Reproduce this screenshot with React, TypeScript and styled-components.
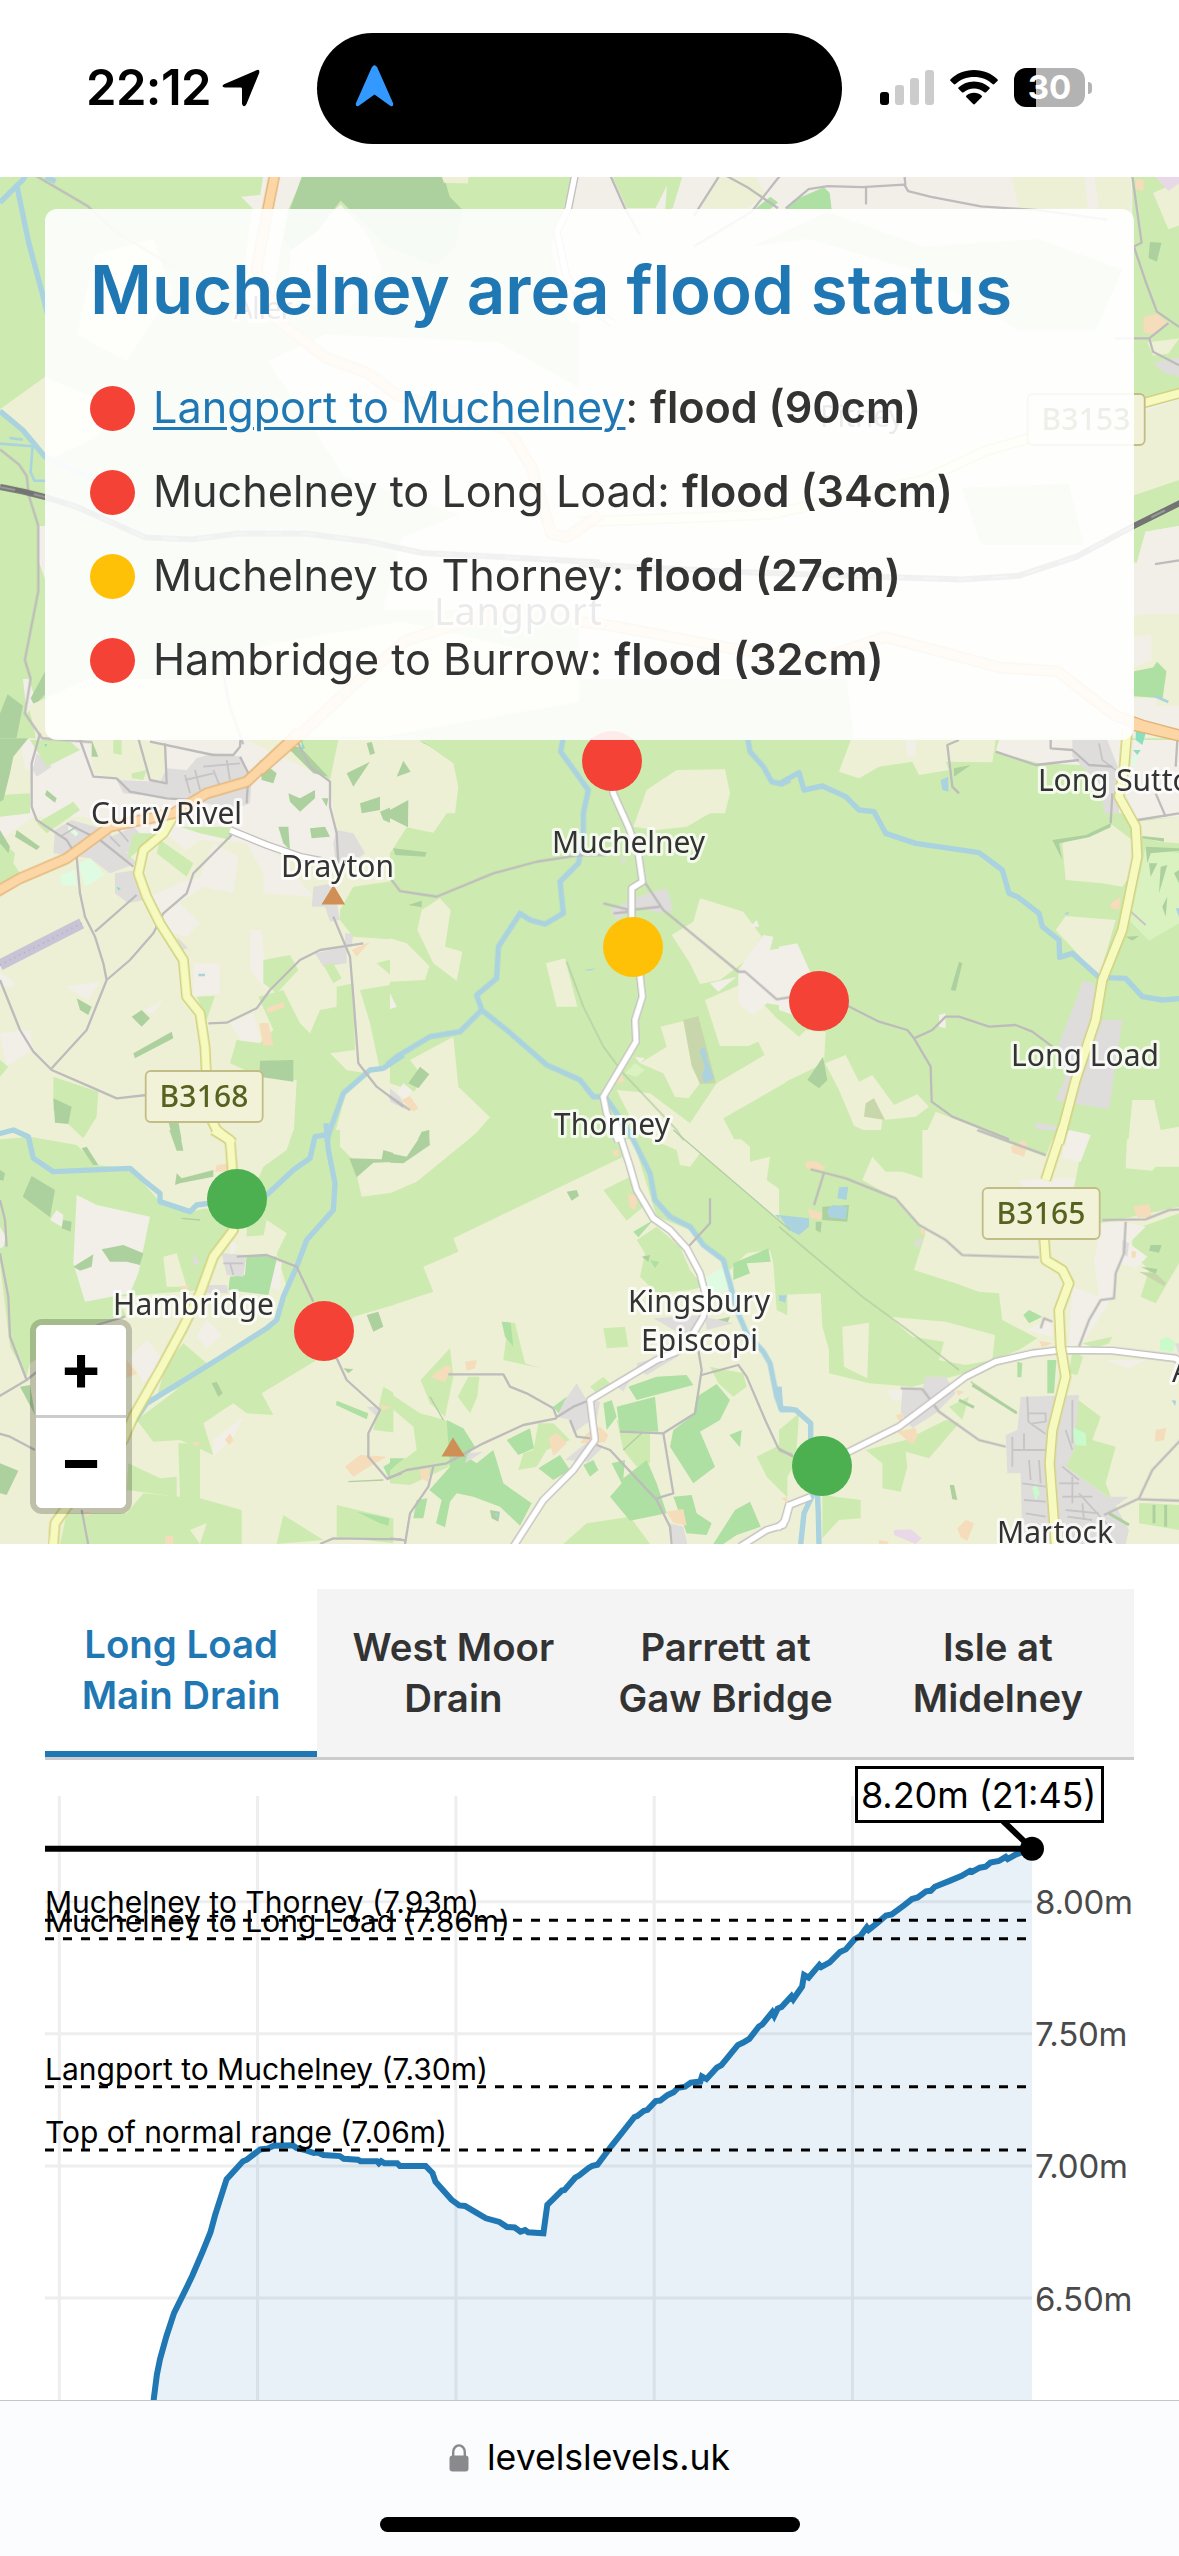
import React from 'react';
import styled, { createGlobalStyle } from 'styled-components';

const Global = createGlobalStyle`
  * { box-sizing: border-box; }
  body { margin: 0; background: #fff; font-family: Inter, "Liberation Sans", sans-serif; }
`;

const BLUE = '#1f77b4';
const RED = '#f44336';
const AMBER = '#ffc107';
const GREEN = '#4caf50';

/* ---------- page frame ---------- */

const Screen = styled.div`
  width: 1179px;
  height: 2556px;
  display: flex;
  flex-direction: column;
  overflow: hidden;
  background: #fff;
`;

const StatusBar = styled.header`
  height: 177px;
  flex: none;
  display: flex;
  align-items: flex-start;
  padding-top: 33px;
`;

const StatusLeft = styled.div`
  width: 317px;
  height: 111px;
  padding: 0 0 2px 86px;
  display: flex;
  align-items: center;
  gap: 14px;
`;

const Clock = styled.span`
  width: 122px;
  font-size: 49px;
  font-weight: 600;
  line-height: 60px;
  letter-spacing: -0.6px;
  color: #000;
`;

const Island = styled.div`
  width: 525px;
  height: 111px;
  border-radius: 56px;
  background: #000;
  display: flex;
  align-items: center;
  padding: 0 0 5px 38px;
`;

const StatusRight = styled.div`
  height: 111px;
  padding: 0 0 2px 38px;
  display: flex;
  align-items: center;
  gap: 16px;
`;

const Signal = styled.div`
  width: 54px;
  height: 35px;
  display: flex;
  align-items: flex-end;
  gap: 6px;
`;

const SignalBar = styled.i<{ $h: number; $on?: boolean }>`
  width: 9px;
  height: ${(p) => p.$h}px;
  border-radius: 3px;
  background: ${(p) => (p.$on ? '#000' : '#ccc')};
`;

const Battery = styled.div`
  display: flex;
  align-items: center;
  gap: 3px;
`;

const BatteryBody = styled.div`
  width: 71px;
  height: 39px;
  border-radius: 12px;
  background: linear-gradient(to right, #000 22px, #b3b3b3 22px);
  color: #fff;
  font-size: 33px;
  font-weight: 700;
  line-height: 39px;
  text-align: center;
`;

const BatteryTip = styled.i`
  width: 4px;
  height: 12px;
  border-radius: 0 4px 4px 0;
  background: #b3b3b3;
`;

/* ---------- map ---------- */

const MapSection = styled.section`
  position: relative;
  height: 1367px;
  flex: none;
  overflow: hidden;
`;

const MapSvg = styled.svg`
  display: block;
  width: 1179px;
  height: 1367px;
`;

const TileLayer = styled.g`
  filter: blur(0.7px);
`;

const MapLabel = styled.text`
  font-family: "Noto Sans", sans-serif;
  font-size: 30px;
  fill: #333;
  stroke: rgba(255, 255, 255, 0.75);
  stroke-width: 6px;
  stroke-linejoin: round;
  paint-order: stroke;
`;

const ShieldLabel = styled.text`
  font-family: "Noto Sans", sans-serif;
  font-size: 30px;
  font-weight: 500;
  fill: #57621f;
`;

const StatusPanel = styled.div`
  position: absolute;
  left: 45px;
  top: 32px;
  width: 1089px;
  height: 531px;
  padding: 42px 45px;
  border-radius: 12px;
  background: rgba(255, 255, 255, 0.9);
`;

const PanelTitle = styled.h1`
  margin: 0 0 50.5px;
  color: ${BLUE};
  font-size: 67.2px;
  font-weight: 600;
  line-height: 77px;
  white-space: nowrap;
`;

const RouteList = styled.ul`
  list-style: none;
  margin: 0;
  padding: 0;
  display: flex;
  flex-direction: column;
  gap: 24px;
`;

const RouteRow = styled.li`
  display: flex;
  align-items: center;
  gap: 18px;
  height: 60px;
  color: #333;
  font-size: 43.2px;
  line-height: 60px;
  white-space: nowrap;

  b { font-weight: 600; }
`;

const RouteText = styled.span`
  padding-bottom: 3px;
`;

const Dot = styled.i<{ $color: string }>`
  width: 45px;
  height: 45px;
  border-radius: 50%;
  background: ${(p) => p.$color};
`;

const RouteLink = styled.a`
  color: ${BLUE};
  text-decoration: underline;
  text-decoration-thickness: 3px;
  text-underline-offset: 4px;
`;

const ZoomControl = styled.div`
  position: absolute;
  left: 30px;
  top: 1142px;
  width: 102px;
  border: 6px solid rgba(0, 0, 0, 0.2);
  border-radius: 12px;
  background-clip: padding-box;
`;

const ZoomButton = styled.button<{ $first?: boolean }>`
  display: block;
  width: 90px;
  height: ${(p) => (p.$first ? 93 : 90)}px;
  padding: 0 0 6px;
  border: 0;
  border-bottom: ${(p) => (p.$first ? '3px solid #ccc' : '0')};
  border-radius: ${(p) => (p.$first ? '6px 6px 0 0' : '0 0 6px 6px')};
  background: #fff;
  color: #000;
  font: 700 65px/84px Inter, sans-serif;
`;

/* ---------- tabs and chart ---------- */

const TabBar = styled.nav`
  flex: none;
  margin: 45px 45px 0;
  display: grid;
  grid-template-columns: repeat(4, 1fr);
  height: 171px;
  border-bottom: 3px solid #ccc;
`;

const Tab = styled.button<{ $active?: boolean }>`
  display: flex;
  align-items: center;
  justify-content: center;
  border: 0;
  border-bottom: ${(p) => (p.$active ? `6px solid ${BLUE}` : '0')};
  padding: 0 10px;
  background: ${(p) => (p.$active ? '#fff' : '#f4f4f4')};
  color: ${(p) => (p.$active ? BLUE : '#333')};
  font: 600 38.4px/51px Inter, sans-serif;
  white-space: pre;
`;

const ChartSvg = styled.svg`
  display: block;
  flex: none;
  width: 1179px;
  height: 640px;
`;

const ThresholdText = styled.text`
  font-size: 30px;
  fill: #000;
`;

const AxisText = styled.text`
  font-size: 33px;
  fill: #4a4a4a;
`;

const CalloutText = styled.text`
  font-size: 36px;
  fill: #000;
`;

/* ---------- browser bar ---------- */

const BrowserBar = styled.footer`
  flex: none;
  height: 156px;
  border-top: 1px solid #c3c6c8;
  background: #fbfcfd;
  display: flex;
  flex-direction: column;
  align-items: center;
  justify-content: space-between;
  padding: 35px 0 24px;
`;

const Address = styled.div`
  display: flex;
  align-items: center;
  gap: 18px;
  font-size: 35.6px;
  line-height: 44px;
  color: #000;
`;

const HomeIndicator = styled.i`
  width: 420px;
  height: 15px;
  border-radius: 8px;
  background: #000;
`;

/* ---------- map data ---------- */

type Shape = [kind: string, ...points: string[]];
type Tile = {
  x: number;
  y: number;
  k: number;
  areas: Shape[];
  lines: Shape[];
};

const FILL: Record<string, string> = {
  farm: '#eef0d5',
  grass: '#cdebb0',
  bare: '#f2efe9',
  town: '#dfdddc',
  wood: '#add19e',
  orchard: '#aedfa3',
  yard: '#f5dcba',
  park: '#dffce2',
  pitch: '#c8facc',
  scrub: '#daf2c0',
  olive: '#c8d7ab',
  water: '#aad3df',
  lilac: '#e8d8e8',
  teal: '#88e0be',
};

const tiles: Tile[] = [
  {
    x: 0, y: 170, k: 2.613,
    areas: [
      ['grass', '0,0 1568,0 1568,1500 0,1500'],
      ['bare',
        '690,0 800,0 750,110 700,400 650,400 640,240 660,100 630,70 680,65',
        '1505,0 1568,0 1568,400 1490,400 1440,200',
        '760,210 890,90 960,170 1000,260 900,380 750,330',
        '700,500 850,430 1300,450 1568,600 1568,1150 1000,1150 1050,960 1200,900 900,800',
        '100,930 118,930 118,1070 100,1020', '60,1330 75,1330 95,1390 70,1420'],
      ['wood',
        '795,0 1155,0 1175,70 1210,105 1190,200 1140,250 1010,200 890,80 830,160 760,210 740,180 755,110',
        '0,1420 20,1370 60,1400 40,1500 0,1568', '80,1380 118,1310 118,1370 90,1400'],
      ['farm',
        '1155,18 1225,18 1222,35 1160,33',
        '0,625 118,540 300,620 250,700 130,755',
        '250,220 400,180 450,320 330,500 200,430',
        '75,1400 230,1330 500,1330 700,1240 1050,1180 1568,1300 1568,1380 1000,1480 95,1490'],
    ],
    lines: [
      ['river',
        '0,85 60,25 75,0', '120,18 145,30', '45,45 75,190 110,320 125,380',
        '0,630 60,680 118,750 250,810'],
      ['stream', '0,715 85,722 80,790 90,812 130,812', '25,700 60,705'],
      ['minor',
        '85,10 230,95 300,160 450,250',
        '0,730 50,770 70,800 75,850 100,930 100,1100 65,1280 80,1330 65,1420 110,1485 240,1495',
        '580,1300 600,1400 635,1500'],
      ['rail', '0,828 60,840 120,855 200,880 380,960 500,965 620,950 800,950 960,970 1100,1000 1568,1025'],
      ['tertiary', '1505,0 1485,100 1455,160 1480,280 1530,350 1600,400'],
      ['aroad',
        '720,0 690,150 670,260 720,390 800,450 850,490 960,530 1040,590 1150,620 1330,680 1390,780 1440,950 1480,960 1568,900',
        '680,1568 780,1480 930,1340 1060,1230 1150,1200 1370,1140'],
    ],
  },
  {
    x: 579, y: 170, k: 2.613,
    areas: [
      ['bare', '0,0 1568,0 1568,1480 0,1480'],
      ['grass',
        '80,0 275,0 245,100 225,105 230,40 200,100 125,100',
        '1445,0 1568,0 1568,590 1450,620',
        '450,200 650,110 900,200 1200,180 1420,260 1350,420 1150,420 900,270 600,180',
        '0,1330 700,1330 720,1500 0,1500', '1000,830 1280,820 1320,980 1050,980'],
      ['farm',
        '370,0 450,0 490,65 440,100 320,100', '1125,0 1320,0 1330,100 1150,102', '1345,0 1445,0 1440,110 1360,110',
        '1500,60 1568,30 1568,145 1540,155', '1450,640 1568,600 1568,810 1450,850',
        '1450,1160 1568,1160 1568,1400 1450,1400', '1485,450 1568,440 1540,480 1500,485'],
      ['orchard', '560,80 640,45 655,60 660,102 540,102', '460,102 500,70 520,85 500,102'],
      ['lilac', '1490,0 1568,0 1568,35 1540,55'],
      ['wood', '1492,188 1522,190 1510,240 1488,230'],
      ['yard', '1475,385 1510,375 1540,400 1500,430 1475,425', '1455,25 1475,25 1475,55 1455,50'],
      ['town', '1500,505 1568,490 1568,540 1530,530'],
      ['grass', '1450,850 1568,810 1568,930 1480,945 1475,1030 1450,1025'],
      ['bare', '1480,945 1568,930 1568,1150 1450,1165 1455,1035', '1450,1220 1495,1215 1495,1280 1450,1300', '1450,1380 1510,1380 1500,1430 1450,1420'],
      ['orchard', '1450,1310 1500,1300 1510,1285 1535,1310 1525,1380 1450,1375'],
    ],
    lines: [
      ['minor',
        '80,10 120,100 160,170', '365,18 300,120', '375,10 440,45 520,100', '525,15 450,110 300,200',
        '540,100 600,50 650,42 740,45 850,38 860,55 920,70 1050,95 1200,105 1380,130',
        '750,45 750,90', '850,10 853,40',
        '1445,10 1470,190 1450,200 1480,290 1510,370 1568,410', '1400,440 1490,440 1540,400',
        '1490,440 1500,475 1568,510', '1505,1030 1568,1020'],
      ['stream', '1505,1375 1540,1390'],
      ['rail', '0,1030 400,1050 700,1060 1000,1070 1150,1060 1300,1010 1450,930 1580,865'],
      ['broad', '1600,575 1470,610', '1180,700 1060,735 900,810 500,900 0,920'],
      ['aroad', '0,1180 80,1190 400,1250 620,1280 800,1220 1100,1300 1250,1310 1400,1425 1470,1450 1600,1485'],
    ],
  },
  {
    x: 0, y: 730, k: 3,
    areas: [
      ['farm', '0,25 1200,25 1200,1235 0,1235'],
      ['bare',
        '60,30 740,30 990,150 1010,330 1000,400 830,370 940,500 790,490 790,430 740,340 600,330 560,360 480,300 420,350 320,280 250,260 100,260 0,330 0,260 90,200',
        '470,560 540,520 600,580 560,620 480,600', '610,470 700,490 715,380 640,340 600,440 540,460 450,500 470,560',
        '580,700 660,700 660,790 580,800', '750,600 785,600 800,780 750,720', '690,880 760,850 780,930 740,960',
        '0,910 90,900 95,960 20,1010', '0,725 45,760 40,770 0,770', '195,770 300,755 265,810', '425,845 490,810 460,850'],
      ['farm', '270,30 420,30 450,150 350,150 280,130', '420,30 500,40 490,160 450,150', '10,160 100,110 90,190 10,190'],
      ['town',
        '350,150 480,155 500,115 560,120 590,85 640,70 725,80 755,150 750,220 700,240 580,210 480,200 370,190',
        '165,300 215,270 320,300 410,400 330,430 270,385 160,370', '310,330 400,290 420,310 390,370',
        '345,430 410,420 430,510 385,520 345,490', '1010,300 1060,310 1095,370 1010,430 1000,340',
        '940,470 1000,460 1020,570 990,575 975,530 935,530', '945,670 1040,650 1040,700 970,710',
        '1035,610 1060,610 1055,650 1035,650', '110,70 155,110 110,140 98,120', '530,620 565,655 540,660'],
      ['grass',
        '90,30 205,30 240,60 140,110', '0,195 90,190 90,250 0,260', '110,280 220,215 240,240 140,310',
        '0,330 45,370 40,400 60,430 0,460', '400,310 460,310 430,350 380,390', '480,330 580,400 560,440 470,370',
        '540,290 700,290 690,330 600,310', '900,30 1015,30 990,150 930,120', '395,130 440,120 430,150 395,145',
        '1020,540 1060,470 1200,450 1200,630 1060,620 1020,570', '790,690 870,675 895,720 830,790 790,760',
        '775,800 850,780 900,880 930,910 960,840 1010,830 1010,770 1060,760 1065,960 990,970 1040,1020 1100,1030 1040,1080 1000,1230 880,1230 890,1050 780,1040 690,1000 710,930 780,940 820,900',
        '1080,780 1200,760 1200,960 1140,1020 1110,880', '160,1040 295,1085 290,1160 250,1225 160,1140',
        '590,800 645,797 620,870', '0,990 25,1010 0,1040', '970,705 1000,700 1025,745 1000,760', '340,30 365,30 365,75 340,70', '1130,700 1200,680 1200,760'],
      ['wood',
        '0,25 85,25 40,80 30,130 10,210 0,215', '140,180 170,205 165,218 135,195', '50,300 120,350 110,360 45,320', '0,300 30,350 25,370 0,340',
        '230,805 275,830 265,855 240,840', '395,860 425,840 450,865 425,890', '400,970 515,905 520,925 405,985',
        '780,992 880,990 880,1055 778,1040', '160,1105 215,1130 205,1182 165,1178', '865,190 900,205 945,180 945,205 900,245 870,215',
        '835,290 865,290 870,360 850,340', '930,295 975,290 990,320 935,325', '1040,130 1110,95 1060,170', '1080,220 1140,200 1140,240 1085,250',
        '1140,245 1200,220 1200,290 1150,270', '1100,40 1115,35 1125,70 1110,75', '780,90 830,130 820,160 785,150',
        '860,50 900,50 985,140 940,130', '275,30 295,80 275,80', '965,205 985,205 980,230', '505,1175 535,1175 545,1230 520,1230'],
      ['yard', '1055,660 1110,635 1070,680', '800,835 850,815 855,830 805,850', '778,880 805,878 820,945 790,948'],
      ['park', '235,400 270,385 315,435 255,470', '180,435 225,420 230,468 185,465', '205,285 235,310 228,320 205,300'],
      ['teal', '905,30 915,55 905,60', '350,470 362,475 355,482', '132,42 142,42 138,52'],
    ],
    lines: [
      ['minor',
        '120,10 95,100 95,230 110,270 200,330 230,380 240,490 255,560 285,620 310,700 320,750',
        '240,30 280,140 350,145 390,185 500,205 580,210', '415,25 450,150 500,160 495,40', '450,35 640,75 700,75 720,50 722,20',
        '720,80 745,130 740,220', '200,280 300,330 400,410', '285,605 410,495',
        '695,315 580,430 560,490 490,550 460,610 390,690 320,750 260,900 155,1015',
        '0,750 60,900 100,965 155,1020 270,1070 350,1105 440,1095',
        '625,880 680,878 770,835 810,780 900,690 960,660 1090,640',
        '895,40 930,110 990,155 990,230 1010,310 1015,400', '1000,560 1050,680 1060,800 1075,1000 1130,1070 1210,1130'],
      ['street', '555,135 570,190', '585,120 600,180', '555,150 640,130', '610,110 720,100', '330,320 360,350', '355,300 385,335', '180,320 230,290', '640,120 660,170', '680,90 690,150'],
      ['river', '1210,975 1150,1015 1110,1020 1030,1090 990,1200 980,1235'],
      ['stream', '595,735 615,735'],
      ['runway', '0,705 245,580'],
      ['tertiary', '690,300 800,345 900,380 1000,400'],
      ['broad', '525,250 490,310 430,360 415,430 440,500 480,580 550,690 560,800 600,850 615,950 620,1050', '630,1160 650,1200 700,1240'],
      ['aroad', '-10,485 60,445 200,385 330,290 520,250 620,190 740,155 900,5'],
    ],
  },
  {
    x: 390, y: 730, k: 3,
    areas: [
      ['grass', '0,25 1200,25 1200,1235 0,1235'],
      ['farm',
        '0,30 90,30 190,100 205,170 195,250 170,250 130,308 50,292 0,370',
        '730,290 770,180 860,120 1005,118 1020,190 1005,250 960,250 890,290 800,300',
        '82,600 95,540 150,505 182,540 165,650 217,665 200,752 130,700', '0,625 50,640 118,708 105,750 0,755',
        '60,990 190,920 205,1070 300,1162 230,1242 0,1242 0,1060 150,1110 130,1170 60,1140 90,1030',
        '468,700 525,685 562,830 500,830', '845,615 910,575 930,505 1060,545 1115,620 1070,690 990,750 930,762 900,700',
        '945,810 1060,760 1200,905 1200,930 1135,1000 1105,935 1075,948 990,948',
        '812,890 880,873 905,1010 930,1060 895,1105 855,1100 820,1030 750,1000 830,950',
        '680,1080 780,1090 900,1180 980,1060 1200,930 1200,1050 1000,1165 1040,1242 760,1242'],
      ['bare', '1045,720 1120,615 1150,620 1140,660 1200,650 1200,830 1130,820 1090,855 1045,820', '960,760 1040,740 985,785', '1080,590 1100,570 1108,590', '0,790 20,830 0,838', '735,980 765,985 750,1000', '20,1090 40,1060 65,1080 50,1110'],
      ['town', '660,540 760,495 830,475 850,540 810,550 740,530 680,570', '0,1075 30,1100 50,1140 0,1115', '690,375 710,390 700,405'],
      ['wood', '20,140 40,92 62,125', '0,240 55,210 54,292 0,265', '10,355 110,367 105,380 15,375', '55,525 95,512 95,532', '55,1060 90,1010 118,1033 85,1075', '80,1235 95,1205 118,1200 118,1235', '85,30 125,50 100,40'],
      ['olive', '880,870 925,858 978,1060 930,1062 905,1005'],
      ['water', '928,960 945,952 952,990 972,1045 945,1060 935,1040 945,1010', '580,720 620,715 600,722'],
      ['scrub', '705,1030 735,1000 765,1020 740,1040'],
      ['yard', '35,1110 60,1098 85,1135 70,1145', '675,1060 695,1035 705,1055'],
    ],
    lines: [
      ['minor',
        '5,450 30,483 140,500 310,430 440,395 570,375 650,375', '760,450 820,540 1045,725 1065,725 1160,808 1210,800',
        '640,520 720,540 810,530', '670,550 720,545', '0,1100 60,1140'],
      ['path', '530,695 580,830 640,950 700,1030 860,1200 880,1230'],
      ['river',
        '520,20 512,65 595,180 580,250 580,330 565,400 510,455 520,550 465,582 420,570 390,550 325,650 320,745 260,795 275,840 210,905 120,920 20,980 -10,1005',
        '275,840 350,900 470,1005 570,1050 610,1100 645,1100 680,1150 720,1215',
        '1072,20 1080,65 1120,110 1145,155 1175,162 1200,150'],
      ['tertiary', '665,150 670,190 715,290 745,370 757,455 725,475 725,580', '748,720 757,800 735,870 738,935 640,1100 650,1150 685,1235'],
    ],
  },
  {
    x: 779, y: 730, k: 3,
    areas: [
      ['grass', '20,25 1200,25 1200,1235 20,1235'],
      ['farm',
        '215,30 650,30 640,97 500,95 510,120 420,135 400,95 300,110 240,145 180,125',
        '850,340 1000,285 1060,330 1080,400 1030,470 970,460 860,450', '860,558 1010,570 990,640 960,740 830,600',
        '1070,275 1200,260 1200,340 1140,335 1080,320'],
      ['bare', '380,30 410,30 410,80 385,78', '660,30 1200,30 1200,260 1080,270 1000,240 910,105 780,100 650,65', '0,650 55,640 95,730 60,860 0,840', '480,855 500,850 500,895 480,890', '870,1200 940,1215 930,1242 860,1242'],
      ['town', '880,30 985,30 1020,120 1020,250 975,250 970,200 990,190 920,120 880,80', '910,752 945,760 960,870 1030,870 990,1137 910,1125 830,1110 860,1040 840,940 895,800', '770,1175 840,1190 830,1215 770,1195'],
      ['scrub', '1100,350 1200,370 1200,580 1110,632 1050,570'],
      ['farm', '0,870 60,920 80,900 140,905 135,1000 0,1065',
        '138,1000 200,975 240,1055 280,1035 345,1125 415,1093 450,1130 410,1160 310,1170 305,1207 265,1205 225,1187 180,1080',
        '470,1145 700,1235 430,1235', '1060,1110 1125,1110 1145,1200 1200,1190 1200,1235 1048,1235'],
      ['wood', '820,330 920,315 995,280 995,292 930,322 840,340 850,390', '525,115 575,105 525,140', '540,695 550,700 530,783 515,780', '132,980 145,1050 120,1075 85,1050',
        '1090,318 1155,325 1155,335 1090,325', '1110,400 1135,400 1115,440', '1145,410 1165,405 1140,490', '1185,430 1200,420 1200,460', '1150,530 1165,500 1160,560', '1100,350 1200,355 1200,362 1115,370 1105,400', '1040,620 1080,618 1060,632'],
      ['water', '485,150 508,140 508,185 490,180', '855,550 872,545 865,555', '1190,535 1200,535 1200,560'],
      ['olive', '285,1105 318,1170 255,1160 260,1120'],
      ['yard', '995,520 1025,500 1020,540 995,535'],
      ['teal', '1070,0 1100,10 1090,45 1070,30', '1062,60 1085,60 1075,75'],
      ['park', '1060,80 1075,80 1065,110 1055,105'],
    ],
    lines: [
      ['minor',
        '540,30 505,45 520,170 540,190', '650,65 770,105 900,90', '815,30 815,55 880,60 930,105 1000,110', '1130,190 1160,260', '1075,270 1200,250',
        '195,822 300,875 385,900 405,925 455,1010 458,1115 520,1160 690,1228', '405,925 460,900 500,860 540,860 630,890 710,885 760,905 820,950', '1000,190 995,280', '1195,30 1190,110'],
      ['street', '960,40 970,90 1010,120', '1050,540 1100,585'],
      ['river', '0,162 20,150 60,128 75,180 130,168 200,200 240,240 285,245 320,310 410,340 600,368 670,420 690,490 715,500 780,550 790,590 840,630 842,682 880,670 960,742 1040,745 1090,800 1150,810 1210,805'],
      ['broad', '1045,0 1035,120 1020,200 1070,290 1075,380 1030,600 970,750 950,870 890,1050 840,1240'],
      ['aroad', '1060,-15 1210,20'],
    ],
  },
  {
    x: 0, y: 1130, k: 3,
    areas: [
      ['farm', '0,28 1200,28 1200,1242 0,1242'],
      ['grass',
        '0,28 90,20 230,45 290,105 390,115 480,215 570,245 620,235 700,300 640,380 600,480 350,500 380,560 300,580 90,700 80,740 30,650 0,400',
        '880,0 1020,0 1020,50 1060,90 1085,200 1200,185 1200,520 1060,560 1000,660 785,790 820,855 740,850 700,820 610,880 640,975 540,930 460,935 410,870 650,690 830,570 860,470 830,370 860,310 800,270 740,230 790,110 860,60',
        '535,940 600,940 600,1105 725,1140 725,1242 180,1242 200,1150 380,1150 430,1090 540,1100', '385,1000 480,1045 530,1040 530,1100 380,1080',
        '830,1242 850,1155 970,1230', '1010,1125 1200,1170 1200,1242 1010,1220', '1150,770 1200,800 1200,910 1120,900', '550,640 620,700 580,760 470,800 500,700', '740,230 800,270 790,320 740,320'],
      ['farm', '740,320 855,310 830,370 740,370', '490,380 530,370 560,470 500,470', '570,1200 620,1180 600,1242'],
      ['bare', '230,195 290,225 450,260 415,430 390,490 255,515 220,400', '0,290 18,320 10,350 0,355', '150,270 170,240 190,255 185,290', '390,680 440,630 490,690 430,760', '590,620 620,570 665,615 620,655', '640,930 730,860 700,920 640,980', '820,400 845,395 838,480 812,470', '690,330 715,350 690,380'],
      ['wood', '95,138 165,180 150,262 68,200', '220,410 280,373 275,410 240,422', '305,358 370,345 430,370 420,405 380,395 330,395', '508,0 538,0 550,62 530,62',
        '525,165 530,130 545,145 640,120 640,140 540,160', '1048,85 1145,88 1150,60 1200,75 1200,95 1120,98 1070,142', '1100,555 1135,545 1150,590 1120,605', '635,760 650,755 668,790 655,800',
        '0,1000 55,1022 20,1095 0,1090', '245,55 260,50 295,105 280,105', '60,770 90,765 105,855', '190,270 215,275 212,305 185,295', '0,120 15,130 10,152 0,150', '1030,715 1060,718 1045,730'],
      ['orchard', '740,375 832,380 805,495 685,480 690,440 735,435', '1010,812 1105,850 1100,868 1008,825', '1070,1145 1168,1165 1165,1187 1140,1180', '1150,1010 1200,980 1200,1025 1165,1040'],
      ['town', '665,370 740,375 730,440 680,435', '1100,830 1140,830 1130,860', '625,465 680,465 685,490 620,490', '580,370 600,400 580,405'],
      ['yard', '650,105 690,100 680,125 645,125', '380,690 412,732 380,742', '535,470 572,465 560,480', '1035,1010 1080,975 1160,980 1100,1015 1060,1040', '675,930 690,910 700,930 688,945', '1140,825 1175,830 1150,842', '575,940 600,935 590,950', '495,1220 520,1218 520,1242 495,1242', '255,1145 280,1150 260,1160'],
    ],
    lines: [
      ['minor',
        '0,210 15,270 20,350', '0,370 25,500 30,620 80,750', '-5,800 80,750 130,710', '290,585 375,560', '710,380 800,375 890,410 940,515',
        '1010,685 1040,750 1140,840 1105,910 1105,980 1160,1045 1205,1030', '-5,910 30,920 105,960', '245,1140 265,1245', '960,1242 1000,1225 1205,1228'],
      ['street', '670,400 730,400', '690,400 700,435'],
      ['path', '545,265 600,270', '1045,1055 1150,1050'],
      ['river',
        '-5,12 40,0 85,20 100,85 160,125 390,115 430,150 480,190 480,215 570,245 590,225 700,210 800,195 880,120 930,85 945,20 975,15',
        '978,-20 985,60 1005,160 1000,240 920,330 890,410 850,500 830,570 800,595 650,690 440,820 380,910'],
      ['broad', '640,0 690,30 697,120 700,300 640,380 600,490 545,600 480,720 400,860 370,930 250,1080 200,1130 165,1180 160,1245'],
    ],
  },
  {
    x: 390, y: 1130, k: 3,
    areas: [
      ['farm', '10,28 1200,28 1200,1242 10,1242'],
      ['grass',
        '270,0 680,0 700,80 190,325 205,365 100,410 130,485 0,528 0,190 80,155',
        '720,0 860,60 870,105 900,110 930,70 1200,300 1200,560 1160,540 1150,400 1140,360 1070,370 1020,420 980,370 900,300 800,260',
        '640,180 720,140 760,230 710,272', '740,330 800,290 870,350 900,420 940,470 900,480 800,490 750,440 765,370',
        '1020,0 1200,0 1200,200 1130,150 1140,80 1080,95 1080,50', '0,790 90,850 165,870 255,950 200,1000 60,1065 0,1060 0,1020 80,960 70,890 0,830',
        '92,750 180,655 190,740 165,860 120,820', '203,800 235,740 268,740 262,800 240,850', '640,595 705,590 715,650 650,655', '355,575 375,580 405,700 450,715 340,690',
        '680,870 780,900 780,1000 740,1010 700,960', '400,970 430,960 445,880 490,880 540,930 470,960 440,1010 385,1020', '520,1242 590,1180 720,1160 780,1242', '1100,980 1200,930 1200,1110 1130,1040',
        '600,770 640,740 660,760 620,790', '960,710 1060,730 1070,770 1030,800 985,760'],
      ['park', '950,440 1000,412 1015,480 985,490 950,480'],
      ['orchard',
        '170,870 220,895 255,950 230,980 260,1000 310,960 340,1060 425,1120 390,1187 330,1130 250,1100 200,1090 180,1115 165,1192 138,1180 155,1110 118,1080 180,1010',
        '350,930 420,895 432,955 385,975', '490,830 530,800 520,840 505,850', '445,1015 510,975 540,1020 490,1050', '580,1005 610,990 625,1020 600,1040',
        '680,830 795,800 805,905 690,902', '715,770 800,740 890,735 910,765 740,810', '665,1000 705,990 700,1045 770,990 800,1060 830,1150 720,1172 660,1100 695,1060', '920,800 980,762 1020,810 990,870 930,905 975,1010 910,1060 840,950 850,900 910,855',
        '850,1100 905,1095 920,1150 965,1180 950,1215 890,1210', '1035,1140 1080,1115 1112,1190 1040,1215 1000,1242 970,1242', '1030,400 1135,355 1142,395 1070,400 1080,430 1030,450', '1018,915 1055,900 1050,952',
        '80,1110 112,1105 100,1165 70,1165', '335,575 362,577 370,650 345,620', '730,305 790,270 745,322', '0,985 45,985 0,1020', '780,390 808,395 795,415', '640,820 665,810 680,860 650,900'],
      ['wood', '0,70 50,80 90,20 115,0 120,45 40,100 0,98', '530,185 560,180 567,197 545,212', '755,380 780,375 775,395', '300,1140 330,1145 325,1175 305,1165', '980,570 1020,560 1010,585'],
      ['town', '525,810 560,760 590,810 630,815 620,870 590,880 550,910 540,870 500,860', '740,700 810,680 880,670 770,735 745,720', '790,565 940,555 900,620 850,600', '945,560 1030,580 950,600', '525,990 600,930 640,950 595,995', '840,1180 880,1190 892,1242 850,1242', '670,760 720,750 700,785', '235,970 280,965 225,1000'],
      ['yard', '120,740 170,705 185,715 165,757', '225,695 260,690 255,715 230,722', '475,925 500,908 530,940 490,978', '668,60 685,60 685,80 670,78', '712,190 745,200 735,240 720,235', '590,910 630,890 655,915 645,937 570,940', '830,1145 880,1137 890,1187 850,1178', '90,1020 118,1012 115,1055 92,1045', '1173,1105 1200,1100 1200,1122', '845,325 860,330 850,342'],
      ['water', '1155,255 1200,255 1200,285 1175,275', '1165,500 1190,495 1185,520', '310,1150 325,1150 322,1165'],
    ],
    lines: [
      ['minor',
        '175,733 340,733 360,770 410,790 490,835 500,862 550,830 600,810', '-10,1048 50,1020 170,1000 280,940 400,885 500,865', '130,1010 115,1070 60,1150 45,1242',
        '620,945 660,960 800,1110 840,1190 845,1242', '820,910 850,1090 800,1105', '925,660 935,720 915,850 820,910 690,905', '935,735 1045,705 1070,740 1130,880 1165,955 1210,980',
        '895,350 960,280 960,205', '0,1225 50,1232', '540,870 560,920 600,925'],
      ['path', '850,0 1200,300', '120,800 160,870', '700,960 760,905'],
      ['river', '700,-20 725,20 780,130 795,210 840,260 900,290 940,345 1000,390 1020,460 1040,540 1070,610 1120,665 1140,700 1160,800 1175,840 1205,838'],
      ['tertiary', '675,-30 720,110 740,180 790,265 840,300 890,355 930,430 948,500 940,560 910,610', '860,665 800,690 600,810 615,930 550,1020 460,1110 370,1250', '1050,1250 1130,1200 1180,1185 1198,1120'],
    ],
  },
  {
    x: 779, y: 1130, k: 3,
    areas: [
      ['farm', '25,28 1200,28 1200,1242 25,1242'],
      ['grass',
        '0,0 430,0 430,60 430,145 370,125 320,125 280,80 250,150 340,200 440,310 405,420 530,460 600,485 660,490 670,570 775,625 720,660 640,690 560,730 400,770 270,760 150,730 150,660 130,590 125,490 0,495',
        '590,0 830,0 800,80', '920,0 930,20 900,95 880,200 960,280 1040,265 1200,230 1200,110 1130,110 1120,122 1040,115 1045,0',
        '1060,300 1200,250 1200,400 1130,520 1085,500 1110,420 1060,370', '260,960 380,930 500,870 540,880 450,985 380,965 385,1010 365,1085 310,1075 310,1000',
        '130,1095 245,1110 245,1165 180,1170 130,1225', '0,900 60,850 50,1000 0,1080', '885,800 965,860 940,930 1010,950 980,1060 1000,1110 860,1010', '1080,1120 1110,1120 1200,1125 1200,1200 1080,1180', '880,660 912,680 895,735 870,730', '510,830 570,800 550,870', '910,640 1000,620 990,640 950,655'],
      ['farm', '190,590 270,578 265,745 195,710', '330,560 500,575 648,615 640,690 560,705 480,690 495,635 400,620', '430,35 590,0 430,0'],
      ['bare', '860,0 935,15 905,95 850,85', '720,150 890,145 880,175 730,170', '970,280 1030,275 1100,290 1050,340 1105,380 1070,415 1020,400 1000,500 945,590 910,640 870,650 880,470 960,500 945,390', '740,600 820,570 820,620', '325,780 370,780 370,810 340,812', '980,690 1100,690 1050,715'],
      ['town', '725,800 900,795 885,960 860,1010 1000,1110 1050,1200 1040,1242 730,1242 725,1030 685,1030 680,915 715,900', '370,775 430,780 440,740 500,740 530,790 470,850 400,895 365,850', '960,1100 1050,1100 980,1150', '1188,640 1200,640 1200,675', '1030,330 1050,340 1045,380 1030,370', '410,330 435,325 420,350 405,348'],
      ['orchard', '733,555 750,540 790,560 750,580', '805,690 832,690 825,790 805,790', '715,695 730,700 727,742 715,742'],
      ['pitch', '1143,630 1165,620 1190,640 1180,667 1143,660', '875,890 920,910 922,948 890,945', '760,1075 770,1055 782,1090 770,1112'],
      ['wood', '1085,410 1135,417 1130,432', '1115,345 1148,345 1140,368 1110,362', '512,1065 525,1065 535,1110 520,1108', '130,230 210,225 205,275 130,270', '110,275 128,275 125,308 110,300'],
      ['olive', '1080,425 1130,430 1162,460 1155,468'],
      ['yard', '80,95 110,92 140,112 130,122 80,115', '85,235 130,250 125,270 95,265', '695,50 735,30 745,45 735,80 700,68', '1062,230 1112,222 1117,262 1075,262', '780,632 820,640 790,652', '355,905 410,893 415,920 400,945', '350,855 375,850 365,880', '535,1195 560,1170 585,1180 565,1232 545,1222', '1130,900 1162,893 1155,930 1128,935', '420,302 440,298 435,318', '530,780 555,785 538,797', '1058,362 1072,365 1068,385 1058,382', '300,1230 330,1235 325,1242 300,1242'],
      ['lilac', '345,1200 395,1198 428,1225 410,1242 345,1215'],
      ['water', '145,240 160,225 205,230 200,268 150,262', '180,172 208,170 202,210 175,205', '0,255 90,265 90,290 60,315 30,300', '1178,810 1192,812 1188,828', '0,495 20,498 15,515 0,512'],
    ],
    lines: [
      ['minor',
        '595,0 800,75', '95,118 135,128 200,145 350,205 420,285 500,330 550,375 640,378 780,382', '135,128 105,225', '970,270 1100,268 1170,240 1205,238',
        '1040,275 1035,370 1010,430 1005,505 965,510 930,570 900,650', '365,775 430,777 480,845 600,930 680,950', '1205,930 1120,1020 1080,1105 975,1155', '1080,1108 1205,1112', '785,595 795,565 820,575', '0,960 40,975'],
      ['street',
        '745,800 748,875 800,912', '750,850 800,850 800,875 760,880', '700,960 810,960', '735,910 735,960', '700,920 700,1010', '750,990 755,1050', '780,990 785,1060', '730,1060 800,1070', '735,1110 800,1115', '740,1150 800,1160',
        '840,1060 900,1060', '880,1040 880,1120', '850,1100 940,1100', '860,1140 960,1150', '900,1090 1000,1200', '880,810 880,940', '860,900 880,960', '850,1010 900,1050', '865,1160 940,1170', '910,1120 915,1170'],
      ['path', '0,290 250,500 400,610 540,720', '575,755 715,850'],
      ['hedge', '580,765 712,848', '540,810 585,832', '990,1150 1050,1185', '1125,1125 1125,1180', '1160,1125 1160,1190'],
      ['river', '0,770 5,835 50,840 95,880 95,950', '105,1085 75,1150 65,1245', '115,1085 118,1150 120,1245'],
      ['tertiary', '-5,1195 20,1170 32,1125 95,1100', '200,970 360,890 480,800 560,740 650,695 760,670 845,660 1000,662 1190,685 1210,700'],
      ['broad', '852,-10 800,150', '795,320 800,390 850,420 870,460 840,540 845,650 860,740 820,900 812,1000 830,1245'],
    ],
  },
];

/* Line styles in draw order: each pass is stroked over every tile before the next one. */
const passes: { kind: string; color: string; width: number; dash?: string }[] = [
  { kind: 'runway', color: '#c8c4d6', width: 11 },
  { kind: 'runway', color: '#b3afc6', width: 1.5, dash: '4 12' },
  { kind: 'path', color: '#b3cda4', width: 1.4 },
  { kind: 'hedge', color: '#add19e', width: 3 },
  { kind: 'stream', color: '#aad3df', width: 2.6 },
  { kind: 'river', color: '#aad3df', width: 5.4 },
  { kind: 'street', color: '#c6c4c4', width: 1.8 },
  { kind: 'minor', color: '#bdbbbb', width: 2.3 },
  { kind: 'tertiary', color: '#c4c2c0', width: 8.2 },
  { kind: 'tertiary', color: '#ffffff', width: 5.4 },
  { kind: 'broad', color: '#d3d283', width: 11 },
  { kind: 'broad', color: '#f7fabf', width: 7.8 },
  { kind: 'aroad', color: '#e2b477', width: 11.4 },
  { kind: 'aroad', color: '#fcd6a4', width: 8.6 },
  { kind: 'rail', color: '#747474', width: 6 },
  { kind: 'rail', color: '#9a9a9a', width: 2, dash: '40 50' },
];

const labels = [
  { text: 'Aller', x: 234, y: 319, w: 59 },
  { text: 'Pitney', x: 820, y: 427, w: 84 },
  { text: 'Curry Rivel', x: 91, y: 823.5, w: 151 },
  { text: 'Drayton', x: 281, y: 876.5, w: 113 },
  { text: 'Muchelney', x: 552, y: 853, w: 153 },
  { text: 'Thorney', x: 554, y: 1134.5, w: 116 },
  { text: 'Kingsbury', x: 628, y: 1312, w: 142 },
  { text: 'Episcopi', x: 641, y: 1350.5, w: 117 },
  { text: 'Long Sutton', x: 1038, y: 791, w: 171 },
  { text: 'Long Load', x: 1011, y: 1066, w: 148 },
  { text: 'Hambridge', x: 113, y: 1315, w: 161 },
  { text: 'Martock', x: 997, y: 1543, w: 116 },
  { text: 'Ash', x: 1172, y: 1382, w: 46 },
];

const shields = [
  { text: 'B3153', x: 1027, y: 394 },
  { text: 'B3168', x: 145, y: 1071 },
  { text: 'B3165', x: 982, y: 1188 },
];

const markers = [
  { x: 612, y: 761, color: RED },
  { x: 633, y: 947, color: AMBER },
  { x: 819, y: 1001, color: RED },
  { x: 237, y: 1199, color: GREEN },
  { x: 324, y: 1331, color: RED },
  { x: 822, y: 1466, color: GREEN },
];

function FloodMap() {
  return (
    <MapSvg viewBox="0 177 1179 1367">
      <rect x="0" y="177" width="1179" height="1367" fill={FILL.farm} />
      <TileLayer>
        {tiles.map((t, i) => (
          <g key={i} transform={`translate(${t.x} ${t.y}) scale(${1 / t.k})`}>
            {t.areas.map(([kind, ...shapes], j) =>
              shapes.map((pts, n) => <polygon key={`${j}-${n}`} points={pts} fill={FILL[kind]} />),
            )}
          </g>
        ))}
        {passes.map((p, n) =>
          tiles.map((t, i) => (
            <g
              key={`${n}-${i}`}
              transform={`translate(${t.x} ${t.y}) scale(${1 / t.k})`}
              fill="none"
              stroke={p.color}
              strokeWidth={p.width * t.k}
              strokeDasharray={p.dash}
              strokeLinejoin="round"
            >
              {t.lines
                .filter(([kind]) => kind === p.kind)
                .flatMap(([, ...ls]) => ls)
                .map((pts) => (
                  <polyline key={pts} points={pts} />
                ))}
            </g>
          )),
        )}
        <path d="M333.5 885 L345 904.5 H321.5 Z M453 1437.5 L465 1456.5 H441.5 Z" fill="#d08f55" />
        {labels.map((l) => (
          <MapLabel key={l.text} x={l.x} y={l.y} textLength={l.w}>
            {l.text}
          </MapLabel>
        ))}
        <MapLabel x="434" y="625" textLength="168" style={{ fontSize: 38 }}>
          Langport
        </MapLabel>
        {shields.map((s) => (
          <g key={s.text}>
            <rect x={s.x + 0.7} y={s.y} width="117" height="51" rx="5" fill="#f2f2d9" stroke="#c2bd86" strokeWidth="1.8" />
            <ShieldLabel x={s.x + 14.5} y={s.y + 36} textLength="89">
              {s.text}
            </ShieldLabel>
          </g>
        ))}
      </TileLayer>
      {markers.map((m) => (
        <circle key={`${m.x}`} cx={m.x} cy={m.y} r="30" fill={m.color} />
      ))}
    </MapSvg>
  );
}

/* ---------- chart ---------- */

/* River level trace, as plotted samples [x, y]. */
const trace: [number, number][] = (
  '401,1275 402,1262 410,1215 418,1185 435,1140 455,1095 485,1050 503,1022 530,975 550,938 562,905 592,835 635,800 645,797 680,777 700,775 715,770 765,769 ' +
  '775,774 800,779 820,784 830,783 845,788 888,790 898,795 935,797 942,800 985,800 990,804 996,800 1005,804 1038,804 1045,809 1112,809 1130,823 1138,840 1180,875 ' +
  '1200,886 1215,887 1240,898 1270,911 1305,918 1325,928 1345,929 1360,937 1372,934 1380,938 1420,940 1430,885 1468,857 1475,856 1503,832 1513,828 1538,813 1548,809 1561,807 ' +
  '1598,770 1658,714 1665,712 1682,702 1692,700 1713,683 1725,682 1745,671 1760,666 1772,657 1790,655 1805,647 1830,645 1834,635 1846,640 1873,618 1885,613 1928,574 1942,569 1958,562 1983,538 1992,534 2018,510 2023,517 ' +
  '2032,503 2042,500 2068,479 2073,485 2096,460 2101,438 2113,443 2141,418 2146,422 2168,413 2195,393 2210,388 2233,368 2248,362 2265,345 2270,350 2295,335 2315,322 2330,320 2363,302 ' +
  '2383,290 2398,287 2420,275 2432,274 2443,266 2483,254 2513,245 2535,235 2540,237 2560,229 2575,227 2588,219 2610,216 2628,208 2633,212 2655,203 2697,192'
)
  .split(' ')
  .map((p) => p.split(',').map(Number) as [number, number])
  .map(([x, y]) => [x / 2.613, 1750 + y / 1.9454]);

const thresholds = [
  { name: 'Muchelney to Thorney', level: 7.93, y: 1920.3, w: 434 },
  { name: 'Muchelney to Long Load', level: 7.86, y: 1938.8, w: 465 },
  { name: 'Langport to Muchelney', level: 7.3, y: 2086.7, w: 443 },
  { name: 'Top of normal range', level: 7.06, y: 2150, w: 402 },
];

const axis = [
  { level: '8.00m', y: 1901.7, w: 98 },
  { level: '7.50m', y: 2033.8, w: 92.5 },
  { level: '7.00m', y: 2165.9, w: 93 },
  { level: '6.50m', y: 2298, w: 97.5 },
];

function LevelChart() {
  const line = trace.map(([x, y]) => `${x.toFixed(1)},${y.toFixed(1)}`).join(' ');
  return (
    <ChartSvg viewBox="0 1760 1179 640">
      {[59.3, 257.6, 455.9, 654.2, 852.5].map((x) => (
        <line key={x} x1={x} x2={x} y1="1796" y2="2400" stroke="#eeeeee" strokeWidth="3" />
      ))}
      {axis.map((a) => (
        <line key={a.level} x1="45" x2="1032" y1={a.y} y2={a.y} stroke="#eeeeee" strokeWidth="3" />
      ))}
      <polygon points={`${line} 1032,2410 150,2410`} fill={BLUE} fillOpacity="0.1" />
      <polyline points={line} fill="none" stroke={BLUE} strokeWidth="6" />
      {thresholds.map((t) => (
        <g key={t.name}>
          <line x1="45" x2="1032" y1={t.y} y2={t.y} stroke="#000" strokeWidth="3" strokeDasharray="9 9" />
          <ThresholdText x="45" y={t.y - 7} textLength={t.w}>
            {`${t.name} (${t.level.toFixed(2)}m)`}
          </ThresholdText>
        </g>
      ))}
      <line x1="45" x2="1032" y1="1848.8" y2="1848.8" stroke="#000" strokeWidth="6" />
      <line x1="1003" x2="1032" y1="1821" y2="1848.8" stroke="#000" strokeWidth="6" />
      <circle cx="1032" cy="1848.8" r="12" fill="#000" />
      <rect x="856.5" y="1767.5" width="246" height="54" fill="#fff" stroke="#000" strokeWidth="3" />
      <CalloutText x="861" y="1808" textLength="235.5">
        8.20m (21:45)
      </CalloutText>
      {axis.map((a) => (
        <AxisText key={a.level} x="1035" y={a.y + 12.5} textLength={a.w}>
          {a.level}
        </AxisText>
      ))}
    </ChartSvg>
  );
}

/* ---------- app ---------- */

const routes = [
  { name: 'Langport to Muchelney', depth: 90, color: RED, link: true },
  { name: 'Muchelney to Long Load', depth: 34, color: RED },
  { name: 'Muchelney to Thorney', depth: 27, color: AMBER },
  { name: 'Hambridge to Burrow', depth: 32, color: RED },
];

const gauges = ['Long Load\nMain Drain', 'West Moor\nDrain', 'Parrett at\nGaw Bridge', 'Isle at\nMidelney'];

export default function App() {
  return (
    <Screen>
      <Global />
      <StatusBar>
        <StatusLeft>
          <Clock>22:12</Clock>
          <svg width="38" height="38" viewBox="0 0 38 38">
            <path d="M34.5 1.2 Q38 -0.4 37.2 4 L24.5 35 Q22 39.5 20 35 V20 Q20 18.6 18.5 18.6 H3 Q-1.5 17.5 2 15.2 Z" fill="#000" />
          </svg>
        </StatusLeft>
        <Island>
          <svg width="39" height="42" viewBox="0 0 39 42">
            <path d="M16.7 2.5 Q19.5 -2 22.3 2.5 L38 38 Q39 42 35.5 41 L19.5 29.5 L3.5 41 Q0 42 1 38 Z" fill="#3399ff" />
          </svg>
        </Island>
        <StatusRight>
          <Signal>
            <SignalBar $h={13} $on />
            <SignalBar $h={20} />
            <SignalBar $h={27} />
            <SignalBar $h={35} />
          </Signal>
          <svg width="48" height="35" viewBox="0 0 48 35">
            <path
              d="M24 0 C33.5 0 41.7 3.6 47.4 9.2 Q48.3 10.2 47.4 11.1 L44.3 14 Q43.4 14.8 42.5 14 C37.7 9.6 31.3 7 24 7 S10.3 9.6 5.5 14 Q4.6 14.8 3.7 14 L.6 11.1 Q-.3 10.2 .6 9.2 C6.3 3.6 14.5 0 24 0 Z M24 11.5 C30.2 11.5 35.4 13.8 39.3 17.3 Q40.2 18.2 39.3 19.1 L36.1 22.2 Q35.2 23 34.3 22.2 C31.5 19.8 28 18.4 24 18.4 S16.5 19.8 13.7 22.2 Q12.8 23 11.9 22.2 L8.7 19.1 Q7.8 18.2 8.7 17.3 C12.6 13.8 17.8 11.5 24 11.5 Z M24 22.8 C27 22.8 29.5 23.8 31.5 25.4 Q32.5 26.3 31.6 27.2 L24.9 34 Q24 34.9 23.1 34 L16.4 27.2 Q15.5 26.3 16.5 25.4 C18.5 23.8 21 22.8 24 22.8 Z"
              fill="#000"
            />
          </svg>
          <Battery>
            <BatteryBody>30</BatteryBody>
            <BatteryTip />
          </Battery>
        </StatusRight>
      </StatusBar>

      <MapSection>
        <FloodMap />
        <StatusPanel>
          <PanelTitle>Muchelney area flood status</PanelTitle>
          <RouteList>
            {routes.map((r) => (
              <RouteRow key={r.name}>
                <Dot $color={r.color} />
                <RouteText>
                  {r.link ? <RouteLink>{r.name}</RouteLink> : r.name}: <b>flood ({r.depth}cm)</b>
                </RouteText>
              </RouteRow>
            ))}
          </RouteList>
        </StatusPanel>
        <ZoomControl>
          <ZoomButton $first>+</ZoomButton>
          <ZoomButton>−</ZoomButton>
        </ZoomControl>
      </MapSection>

      <TabBar>
        {gauges.map((g, i) => (
          <Tab key={g} $active={i === 0}>
            {g}
          </Tab>
        ))}
      </TabBar>

      <LevelChart />

      <BrowserBar>
        <Address>
          <svg width="20" height="28" viewBox="0 0 20 28">
            <rect x="0.5" y="11.5" width="19" height="16" rx="3" fill="#8a8a8e" />
            <path d="M4.2 13 V8 a5.8 6.6 0 0 1 11.6 0 V13" fill="none" stroke="#8a8a8e" strokeWidth="2.4" />
          </svg>
          levelslevels.uk
        </Address>
        <HomeIndicator />
      </BrowserBar>
    </Screen>
  );
}
